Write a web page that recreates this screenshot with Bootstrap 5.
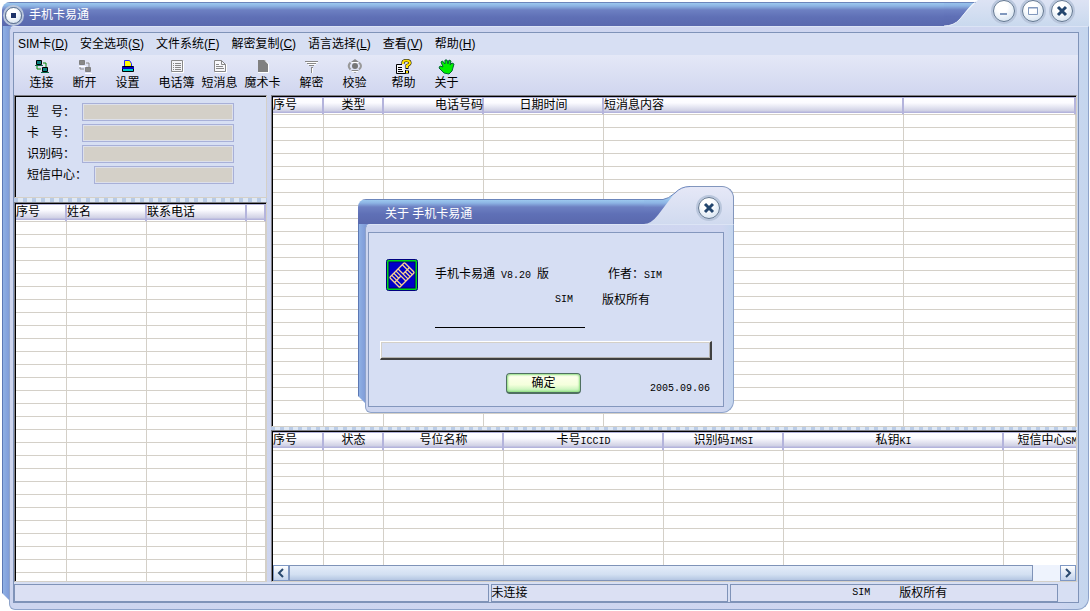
<!DOCTYPE html>
<html lang="zh-CN">
<head>
<meta charset="utf-8">
<meta name="viewport" content="width=device-width, initial-scale=1">
<title>手机卡易通</title>
<link href="https://cdn.jsdelivr.net/npm/bootstrap@5.3.0/dist/css/bootstrap.min.css" rel="stylesheet">
<style>
  :root { --line:#d4d0c8; --edge:#7f93b8; --face:#d7dff3; }
  body { font:12px/16px "Liberation Sans","Noto Sans CJK SC",sans-serif; color:#000; background:#fff; overflow:hidden; }
  button { color:inherit; }
  .mono { font-family:"Liberation Mono","Noto Sans CJK SC",monospace; font-size:10px; }
  .pre { white-space:pre; }

  /* window skin */
  .app { padding:0 1px 1px 2px; }
  .app::before { content:""; position:absolute; left:2px; top:12px; bottom:10px; width:14px;
    background:linear-gradient(90deg,#5c78b4 0 1px,#8fb0e4 1px,#6f86cb); clip-path:polygon(0 0,100% 0,100% 100%,8px 100%,0 calc(100% - 8px)); }
  .blue { background:linear-gradient(#6c86bc 0 1px,#9cc8ee 1px,#8db4e4 4px,#6d80c2 8px,#5f70b6 15px,#5968ad 25px); color:#fff; }
  .app-blue { height:24px; margin-top:2px; border-top-left-radius:8px; padding:2px 0 0 3px; gap:7px; }
  .app-tab { width:103px; height:26px; padding-right:16px; gap:7px; background:linear-gradient(#dde3f4,#c9d9ee); }
  .frame { background:linear-gradient(90deg,#cdd5ef,#cfd6f0 97%,#c4d6ee); border:1px solid #8ea3ca; border-top:1px solid #dce4f5;
    border-radius:5px 0 12px 6px; }
  .app-frame { margin-left:7px; padding:5px 9px 6px 3px; min-height:0; }
  .client { border:1px solid var(--edge); min-width:0; }
  .round-btn { width:22px; height:22px; border:1px solid #647890; border-radius:50%; padding:0; background:radial-gradient(circle at 40% 30%,#fff 30%,#c9daec); box-shadow:0 0 0 2px #b9c6dc; }
  .round-btn svg { display:block; margin:auto; }
  .app-icon { width:17px; height:17px; }

  .menubar { height:22px; gap:12px; padding-left:4px; background:var(--face); }
  .menubar a { color:#000; text-decoration:none; }
  .tools { height:40px; padding:4px 0 0 6px; background:linear-gradient(#e4e8f7,#d0d6ef); }
  .tool { width:43px; border:0; background:none; padding:0; line-height:14px; }
  .tool svg { display:block; margin:0 auto 1px; }
  .tool-gap { margin-left:6px; }

  .work { min-height:0; gap:4px; padding-right:1px; }
  .left-side { width:253px; }
  .right-side { min-width:0; }
  .sunken { --fill:#fff; border:1px solid #808088; border-right-color:var(--line); border-bottom-color:var(--line); padding:1px 0 0 1px; overflow:hidden;
    background:linear-gradient(#000,#000) 0 0/100% 1px no-repeat,linear-gradient(#000,#000) 0 0/1px 100% no-repeat,var(--fill); }
  .splitter { height:4px; background:repeating-linear-gradient(90deg,#b9cbe6 0 4px,#dfe9f6 4px 9px); }
  .splitter.thin { height:3px; }
  .info { --fill:var(--face); height:103px; padding:7px 32px 0 12px; }
  .info .form-control { width:auto; min-width:0; height:18px; min-height:0; padding:0; border:1px solid #a8b0d8; border-radius:0; background:#d4d0c8; box-shadow:inset 0 0 0 1px #dde0ea; font-size:12px; }
  .info .item { margin-bottom:3px; height:18px; }
  .info label { width:55px; line-height:18px; flex-shrink:0; white-space:pre; }
  .info .wide label { width:67px; }
  .top-grid { height:332px; }

  .datagrid { table-layout:fixed; border-collapse:separate; border-spacing:0; width:100%; }
  .datagrid th { height:18px; padding:0; font-weight:400; line-height:16px; vertical-align:top; white-space:nowrap; overflow:hidden; text-align:center;
    border-bottom:1px solid var(--line); border-right:1px solid #b4b4dc;
    background:linear-gradient(#b4b4dc 0 1px,#fff 1px,#fbfbff 6px,#cfd0e4 14px,#b4b4dc 15px) no-repeat 0 0/100% 16px; box-shadow:inset -1px 0 #b4b4dc; }
  .datagrid td { height:13px; padding:0; border-right:1px solid var(--line); border-bottom:1px solid var(--line); }
  .datagrid th.l { text-align:left; }
  .datagrid th.r { text-align:right; }
  .sim-wide { width:831px; }
  .scroll-area { min-height:0; }

  .hscroll { height:16px; background:#eef3fd; }
  .hscroll button { width:16px; border:1px solid #7f98c4; background:linear-gradient(#fff,#c3d3ec); padding:0; }
  .hscroll button svg { display:block; margin:auto; }
  .thumb { flex:743; border:1px solid #7f93b8; background:linear-gradient(#e4ecf9,#d3e0f2 60%,#b4c6e2); }
  .track { flex:27; }

  .status { height:20px; padding:2px 0 0; background:var(--face); gap:2px; }
  .pane { border:1px solid var(--edge); background:#dbe0f3; line-height:16px; }
  .pane-1 { flex:473; } .pane-2 { flex:236; } .pane-3 { flex:315; gap:29px; padding-left:11px; } .pane-4 { flex:18; }

  /* about dialog */
  .overlay { padding:0 0 12px 2px; }
  .about { width:376px; }
  .about::before { content:""; position:absolute; left:0; top:30px; bottom:9px; width:14px;
    background:linear-gradient(90deg,#5c78b4 0 1px,#8fb0e4 1px,#6f86cb); clip-path:polygon(0 0,100% 0,100% 100%,8px 100%,0 calc(100% - 8px)); }
  .about-blue { margin-top:13px; height:25px; border-top-left-radius:8px; padding:7px 0 0 27px; }
  .about-tab { width:44px; border-top:1px solid #8296bd; border-right:1px solid #8296bd; border-top-right-radius:12px; background:linear-gradient(#e6e8f7,#d0daef); padding:10px 0 0 8px; }
  .about-frame { margin-left:7px; padding:7px 9px 5px 2px; }
  .about-body { border:1px solid #8497bd; background:#d6def3; padding:26px 11px 9px; }
  .about-logo { padding-left:6px; }
  .about-text { padding:7px 0 0 17px; }
  .about-text .first { padding-right:50px; }
  .about-text .second { padding:8px 0 0 120px; gap:29px; }
  .rule { width:150px; border-top:1px solid #000; opacity:1; margin:19px 0 13px; }
  .bar-box { height:19px; border:1px solid #fff; border-right:2px solid #404040; border-bottom:2px solid #404040; box-shadow:inset 1px 1px #d4d0c8,inset -1px -1px #b5b3b0; }
  .ok { width:75px; height:21px; border:1px solid #4f7060; border-bottom-width:2px; border-radius:4px; padding:0; font-size:12px; line-height:16px; background:linear-gradient(#ffffef,#f4ffdc 60%,#b8efb0); box-shadow:inset 0 0 2px 1px #8fdd80; color:#000; }
  .actions { padding:13px 0 0 126px; }
  .date { padding:8px 2px 0 0; }
</style>
</head>
<body>
<div class="app position-relative vh-100 d-flex flex-column overflow-hidden">
  <header class="d-flex position-relative">
    <div class="blue app-blue flex-grow-1 d-flex align-items-center">
      <button class="round-btn app-icon" aria-label="系统菜单"><svg width="5" height="5"><path d="M0 0h5v5H0z" fill="#1e3268"/></svg></button>
      <span>手机卡易通</span>
    </div>
    <svg width="42" height="26" viewBox="0 0 42 26" aria-hidden="true">
      <defs><linearGradient id="tb" gradientUnits="userSpaceOnUse" x1="0" y1="2" x2="0" y2="26"><stop offset="0" stop-color="#9cc8ee"/><stop offset=".16" stop-color="#8db4e4"/><stop offset=".33" stop-color="#6d80c2"/><stop offset=".6" stop-color="#5f70b6"/><stop offset="1" stop-color="#5968ad"/></linearGradient>
      <linearGradient id="lt" x2="0" y2="1"><stop offset="0" stop-color="#dde3f4"/><stop offset="1" stop-color="#c9d9ee"/></linearGradient></defs>
      <path d="M34 0H42V26H0Q8 26 14 20Z" fill="url(#lt)"/>
      <path d="M0 2H31Q28 3 16 19Q10 26 0 26Z" fill="url(#tb)"/><path d="M0 2.500H32" stroke="#6c86bc"/>
      <path d="M34 0Q28 4 16 19Q10 26 0 26" fill="none" stroke="#e8effa"/>
    </svg>
    <div class="app-tab d-flex justify-content-end">
      <button class="round-btn" aria-label="最小化"><svg width="14" height="14"><path d="M3 10h7" stroke="#8198bd" stroke-width="2"/></svg></button>
      <button class="round-btn" aria-label="最大化"><svg width="14" height="14"><path d="M2.500 3.500h9v7h-9zM2 4h10" stroke="#8198bd" fill="none"/></svg></button>
      <button class="round-btn" aria-label="关闭"><svg width="14" height="14"><path d="M3 3l8 8M11 3l-8 8" stroke="#24466e" stroke-width="3"/></svg></button>
    </div>
  </header>

  <div class="frame app-frame position-relative flex-grow-1 d-flex">
   <div class="client flex-grow-1 d-flex flex-column">
    <nav class="menubar d-flex align-items-center flex-shrink-0">
      <a href="#">SIM卡(<u>D</u>)</a><a href="#">安全选项(<u>S</u>)</a><a href="#">文件系统(<u>F</u>)</a><a href="#">解密复制(<u>C</u>)</a><a href="#">语言选择(<u>L</u>)</a><a href="#">查看(<u>V</u>)</a><a href="#">帮助(<u>H</u>)</a>
    </nav>
    <div class="tools d-flex flex-shrink-0 align-items-start" role="toolbar">
      <button class="tool"><svg width="16" height="16"><path d="M3 7v3h4M9 4h3v4" stroke="#080" fill="none"/><path d="M2.500 1.500h5v4h-5zM8.500 8.500h5v4h-5z" fill="#088080" stroke="#000"/><path d="M1 6.500h8M7 13.500h8" stroke="#0a6a4a"/></svg>连接</button>
      <button class="tool"><svg width="16" height="16"><path d="M3 7v3h4M9 4h3v4" stroke="#888" fill="none"/><path d="M2.500 1.500h5v4h-5zM8.500 8.500h5v4h-5z" fill="#888" stroke="#808080"/><path d="M2 7.500h7M8 14.500h7" stroke="#fff"/></svg>断开</button>
      <button class="tool"><svg width="16" height="16"><path d="M4.500 8V1.500h5l2 3V8z" fill="#ff0" stroke="#22f"/><path d="M2.500 7.500h11v5h-11z" fill="#0cc" stroke="#000"/><path d="M2 9h12" stroke="#0000c0" stroke-width="2"/></svg>设置</button>
      <button class="tool tool-gap"><svg width="16" height="16"><path d="M2.500 1.500h11v11h-11z" fill="#f4f4f8" stroke="#888"/><path d="M4 4.500h1M6 4.500h6M4 6.500h1M6 6.500h6M4 8.500h1M6 8.500h6M4 10.500h1M6 10.500h6" stroke="#888"/><path d="M3 13.500h11.500V2" stroke="#fff" fill="none"/></svg>电话簿</button>
      <button class="tool"><svg width="16" height="16"><path d="M2.500 1.500h7l4 4v7h-11z" fill="#f8f8fb" stroke="#888"/><path d="M9.500 1.500v4h4M4 5.500h3M4 7.500h7M4 9.500h8" stroke="#888" fill="none"/><path d="M3 13.500h11.500V5" stroke="#fff" fill="none"/></svg>短消息</button>
      <button class="tool"><svg width="16" height="16"><path d="M3 1h7l3 4v8H3z" fill="#808080"/><path d="M3 13.500h10.500V5L10 1.500" stroke="#fff" fill="none"/></svg>魔术卡</button>
      <button class="tool tool-gap"><svg width="16" height="16"><path d="M1 2.500h13M3 4.500h9M5 6.500h5M7 8.500h2M7.500 8v6" stroke="#888" fill="none"/><path d="M2 3.500h12M4 5.500h8M8.500 9v5" stroke="#fff"/></svg>解密</button>
      <button class="tool"><svg width="16" height="16"><path d="M8 0l4 3H4zM8 14l4-3H4z" fill="#888"/><path d="M3.500 3.500Q0 7 3.500 10.500M12 3.500q4 3.500 0 7" fill="none" stroke="#999" stroke-width="2"/><circle cx="8" cy="7" r="3" fill="#777"/><path d="M5 3.500h6M5 12.500h6" stroke="#fff"/></svg>校验</button>
      <button class="tool tool-gap"><svg width="16" height="16"><path d="M6 5.500H.5v9h9V11" fill="#f4f4f8" stroke="#000"/><path d="M2 8.500h4M2 10.500h4M2 12.500h5" stroke="#000"/><path d="M7 5V3.500q0-2 3.500-2t3.500 2.500Q14 5.500 11 6.500V10M9 13h4" fill="none" stroke="#000" stroke-width="3"/><path d="M7 5V3.500q0-2 3.500-2t3.500 2.500Q14 5.500 11 6.500V9M10 13h2" fill="none" stroke="#ffe000" stroke-width="2"/></svg>帮助</button>
      <button class="tool"><svg width="17" height="16"><path d="M6 14L1 9l1-2 3 1-2-5 1.500-1L7 5l0-4h2l1 4 1-4 2 1-1 4 2-2 2 1-2 7-3 3z" fill="#0e0" stroke="#063"/></svg>关于</button>
    </div>

    <main class="work d-flex flex-grow-1">
      <section class="left-side d-flex flex-column flex-shrink-0">
        <form class="sunken info flex-shrink-0">
          <div class="item d-flex align-items-center"><label for="f1">型　号：</label><input id="f1" class="form-control flex-fill" readonly></div>
          <div class="item d-flex align-items-center"><label for="f2">卡　号：</label><input id="f2" class="form-control flex-fill" readonly></div>
          <div class="item d-flex align-items-center"><label for="f3">识别码：</label><input id="f3" class="form-control flex-fill" readonly></div>
          <div class="item wide d-flex align-items-center"><label for="f4">短信中心：</label><input id="f4" class="form-control flex-fill" readonly></div>
        </form>
        <div class="splitter flex-shrink-0"></div>
        <div class="sunken flex-grow-1">
          <table class="datagrid" data-rows="40">
            <colgroup><col width="51"><col width="80"><col width="100"><col></colgroup>
            <thead><tr><th class="l">序号</th><th class="l">姓名</th><th class="l">联系电话</th><th></th></tr></thead><tbody></tbody>
          </table>
        </div>
      </section>

      <section class="right-side d-flex flex-column flex-grow-1">
        <div class="sunken top-grid flex-shrink-0">
          <table class="datagrid" data-rows="24">
            <colgroup><col width="51"><col width="60"><col width="100"><col width="120"><col width="300"><col></colgroup>
            <thead><tr><th class="l">序号</th><th>类型</th><th class="r">电话号码</th><th>日期时间</th><th class="l">短消息内容</th><th></th></tr></thead><tbody></tbody>
          </table>
        </div>
        <div class="splitter thin flex-shrink-0"></div>
        <div class="sunken scroll-area flex-grow-1 d-flex flex-column">
          <div class="scroll-area flex-grow-1 overflow-hidden">
            <table class="datagrid sim-wide" data-rows="30">
              <colgroup><col width="51"><col width="60"><col width="120"><col width="160"><col width="120"><col width="220"><col width="100"></colgroup>
              <thead><tr><th class="l">序号</th><th>状态</th><th>号位名称</th><th>卡号<span class="mono">ICCID</span></th><th>识别码<span class="mono">IMSI</span></th><th>私钥<span class="mono">KI</span></th><th>短信中心<span class="mono">SMSP</span></th></tr></thead><tbody></tbody>
            </table>
          </div>
          <div class="hscroll d-flex flex-shrink-0">
            <button aria-label="向左"><svg width="10" height="10"><path d="M7 1L3 5l4 4" fill="none" stroke="#28486e" stroke-width="2"/></svg></button>
            <div class="thumb"></div><div class="track"></div>
            <button aria-label="向右"><svg width="10" height="10"><path d="M3 1l4 4-4 4" fill="none" stroke="#28486e" stroke-width="2"/></svg></button>
          </div>
        </div>
      </section>
    </main>

    <footer class="status d-flex flex-shrink-0">
      <div class="pane pane-1"></div>
      <div class="pane pane-2">未连接</div>
      <div class="pane pane-3 d-flex justify-content-center"><span class="mono">SIM</span><span>版权所有</span></div>
      <div class="pane-4"></div>
    </footer>
   </div>
  </div>

  <div class="overlay position-absolute top-0 start-0 w-100 h-100 d-flex align-items-center justify-content-center">
    <div class="about position-relative" role="dialog" aria-label="关于 手机卡易通">
      <div class="d-flex position-relative">
        <div class="blue about-blue flex-grow-1">关于 手机卡易通</div>
        <svg width="46" height="38" viewBox="0 0 46 38" aria-hidden="true">
          <defs><linearGradient id="db" gradientUnits="userSpaceOnUse" x1="0" y1="13" x2="0" y2="38"><stop offset="0" stop-color="#9cc8ee"/><stop offset=".16" stop-color="#8db4e4"/><stop offset=".33" stop-color="#6d80c2"/><stop offset=".6" stop-color="#5f70b6"/><stop offset="1" stop-color="#5968ad"/></linearGradient>
          <linearGradient id="dl" x2="0" y2="1"><stop offset="0" stop-color="#e6e8f7"/><stop offset="1" stop-color="#d0daef"/></linearGradient></defs>
          <path d="M46 0Q38 0 31 6L16 25Q8 37 0 38H46Z" fill="url(#dl)"/>
          <path d="M0 13H20Q26 12 30 8L14 29Q7 38 0 38Z" fill="url(#db)"/>
          <path d="M0 13.500H19Q24 13 31 7Q37 .5 46 .5" fill="none" stroke="#6c86bc"/>
        </svg>
        <div class="about-tab"><button class="round-btn d-block" aria-label="关闭"><svg width="14" height="14"><path d="M3 3l8 8M11 3l-8 8" stroke="#24466e" stroke-width="3"/></svg></button></div>
      </div>
      <div class="frame about-frame position-relative">
        <div class="about-body">
          <div class="about-logo d-flex">
            <svg class="flex-shrink-0" width="32" height="32" aria-hidden="true"><rect x=".5" y=".5" width="31" height="31" rx="2" fill="#00d818" stroke="#000080"/><rect x="3" y="3" width="26" height="26" fill="#0000c8" stroke="#000070"/>
              <g transform="rotate(-45 16 16)" fill="none" stroke="#f8d090" stroke-width="1.300"><rect x="5.500" y="9" width="21" height="14" rx="1"/><path d="M5.500 16h9M17.500 16h9M14.500 9v14M17.500 9v14M8.500 9v14M11.500 9v7M20.500 16v7M23.500 9v14"/></g></svg>
            <div class="about-text flex-grow-1">
              <div class="first d-flex justify-content-between"><span>手机卡易通<span class="mono pre"> V8.20 </span>版</span><span>作者：<span class="mono">SIM</span></span></div>
              <div class="second d-flex"><span class="mono">SIM</span><span>版权所有</span></div>
              <hr class="rule">
            </div>
          </div>
          <div class="bar-box"></div>
          <div class="actions d-flex justify-content-between">
            <button class="ok">确定</button><span class="date mono">2005.09.06</span>
          </div>
        </div>
      </div>
    </div>
  </div>
</div>
<script src="https://cdn.jsdelivr.net/npm/bootstrap@5.3.0/dist/js/bootstrap.bundle.min.js"></script>
<script>
  // fill every grid with blank rows; the panel clips the surplus
  document.querySelectorAll('.datagrid').forEach(t => {
    const row = '<tr>' + '<td></td>'.repeat(t.tHead.rows[0].cells.length) + '</tr>';
    t.tBodies[0].innerHTML = row.repeat(+t.dataset.rows);
  });
</script>
</body>
</html>
